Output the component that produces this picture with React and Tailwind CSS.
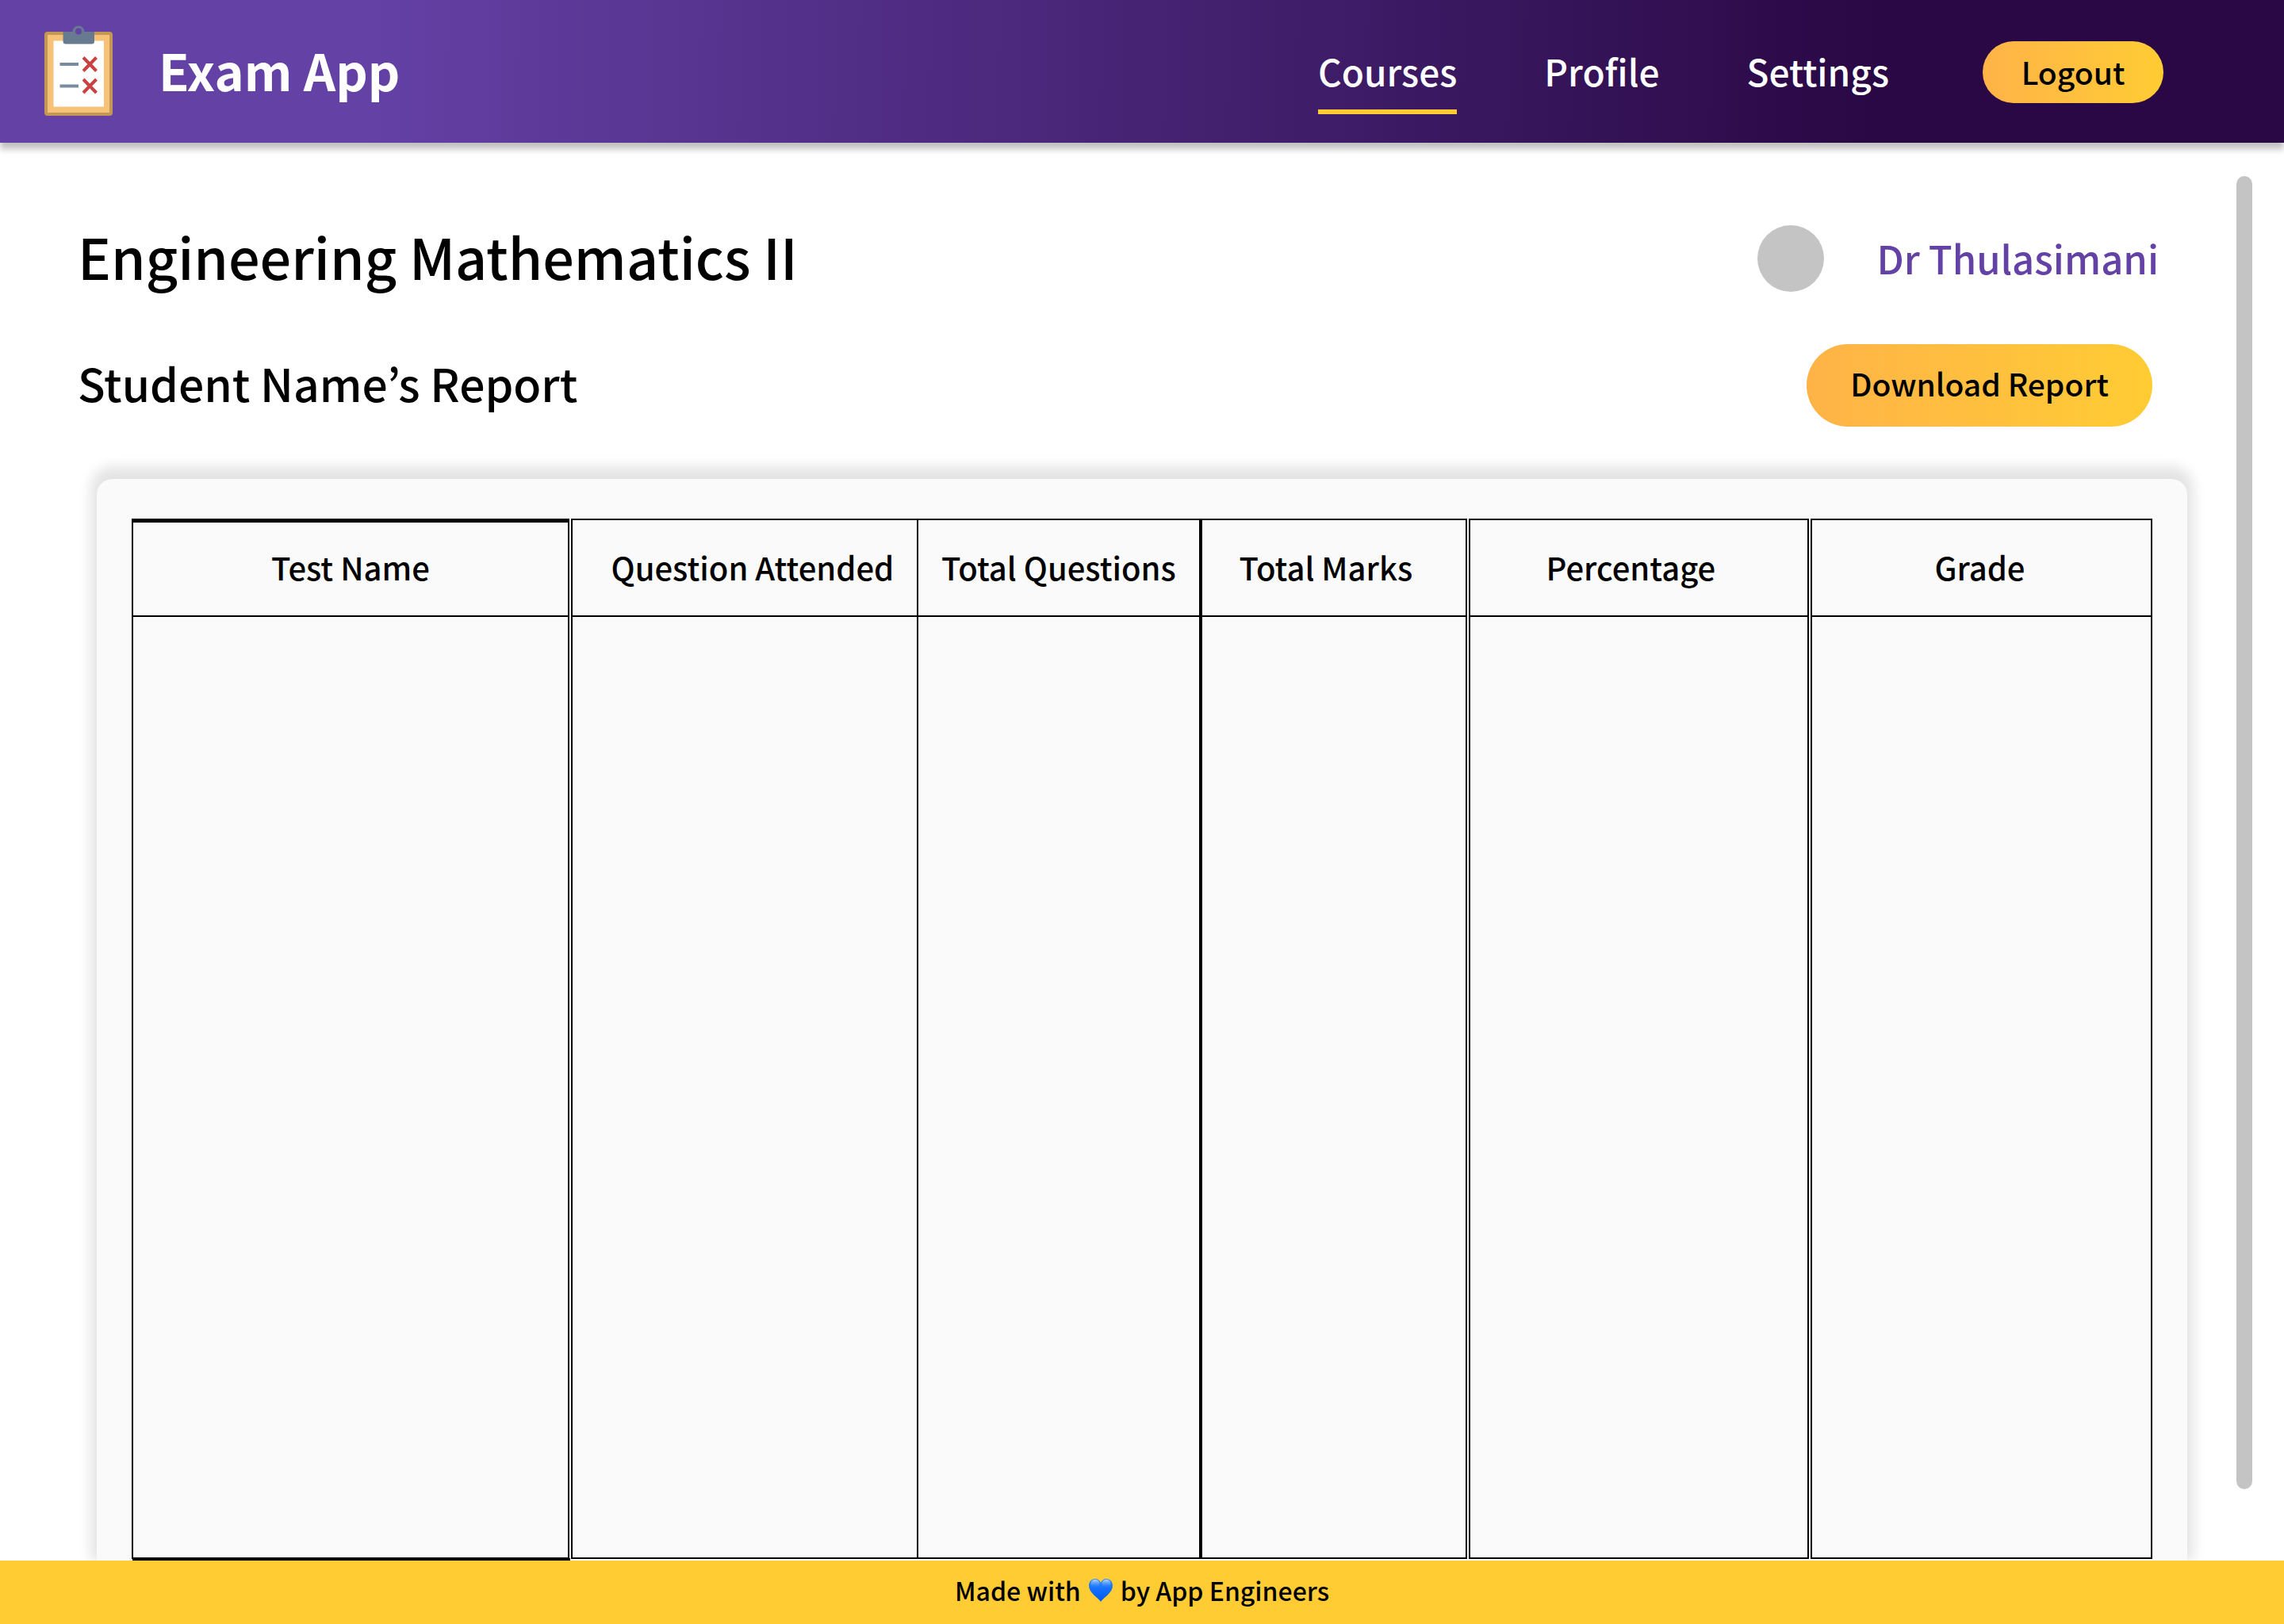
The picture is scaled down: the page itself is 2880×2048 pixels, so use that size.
import React from "react";

const links = ["Courses", "Profile", "Settings"];

const columns = [
  { label: "Test Name", width: "w-[21.68%]", head: "", edge: "border-r-[6px] [border-right-style:double]", first: true },
  { label: "Question Attended", width: "w-[17.2%]", head: "pl-5", edge: "border-r-2" },
  { label: "Total Questions", width: "w-[14.02%]", head: "", edge: "border-r-4" },
  { label: "Total Marks", width: "w-[13.24%]", head: "pr-5", edge: "border-r-[6px] [border-right-style:double]" },
  { label: "Percentage", width: "w-[16.93%]", head: "pr-5", edge: "border-r-[6px] [border-right-style:double]" },
  { label: "Grade", width: "w-[16.93%]", head: "pr-1", edge: "border-r-2" },
];

function ClipboardLogo() {
  return (
    <svg viewBox="0 0 86 116" className="w-[86px] shrink-0" aria-hidden="true">
      <rect x="0" y="8" width="86" height="106" rx="4" fill="#c49755" />
      <rect x="4" y="12" width="78" height="98" fill="#f6c277" />
      <rect x="11.5" y="19.5" width="63.5" height="83" fill="#fff" />
      <path
        fill="#687a8f"
        d="M23.500 8h12a7.500 7.500 0 0 1 15 0h12.500v12a3.500 3.500 0 0 1-3.500 3.500h-32.500a3.500 3.500 0 0 1-3.500-3.500z"
      />
      <circle cx="43" cy="7.500" r="4" fill="#6441a5" />
      <path d="M19.500 49h23.500M19.500 76.500h23.500" stroke="#788ca0" strokeWidth="4" />
      <path
        d="M49 40.500l16.500 17M65.500 40.500l-16.500 17M49 68l16.500 17M65.500 68l-16.500 17"
        stroke="#c94141"
        strokeWidth="4"
      />
    </svg>
  );
}

function BlueHeart() {
  return (
    <svg viewBox="0 0 30 29" className="h-[29px] w-[30px]" role="img" aria-label="love">
      <defs>
        <linearGradient id="heartFill" x1="0" y1="0" x2="0" y2="1">
          <stop offset="0" stopColor="#3c8cf5" />
          <stop offset="0.45" stopColor="#1270fb" />
          <stop offset="1" stopColor="#0058f0" />
        </linearGradient>
        <linearGradient id="heartShine" x1="0" y1="0" x2="0" y2="1">
          <stop offset="0" stopColor="#b4d6ff" />
          <stop offset="1" stopColor="#3f90ff" stopOpacity="0" />
        </linearGradient>
      </defs>
      <path
        d="M15 29C12 24 0 18 0 8.500C0 3.500 3.500 0 8 0c3.500 0 6 2 7 5c1-3 3.500-5 7-5c4.500 0 8 3.500 8 8.500C30 18 18 24 15 29z"
        fill="url(#heartFill)"
      />
      <ellipse cx="8" cy="6" rx="5.500" ry="5" fill="url(#heartShine)" />
      <ellipse cx="22" cy="6" rx="5.500" ry="5" fill="url(#heartShine)" />
    </svg>
  );
}

export default function App() {
  return (
    <div className="flex min-h-screen flex-col bg-white font-['Noto_Sans_CJK_JP',sans-serif] font-medium text-black">
      <header className="relative z-10 flex h-[180px] items-center bg-[linear-gradient(91deg,#6441a5_16%,#2a0845_82%)] pr-[152px] pl-14 text-white shadow-[0_8px_8px_rgba(0,0,0,0.25)]">
        <ClipboardLogo />
        <p className="ml-[58px] pb-1 text-[63px] leading-[80px] font-bold">Exam App</p>
        <nav className="ml-auto flex items-center gap-[110px]">
          {links.map((label) => (
            <a
              key={label}
              href="#"
              className={
                label === "Courses"
                  ? "border-b-[6px] border-[#ffcc33] pt-1 text-[46px] leading-[98px]"
                  : "border-b-[6px] border-transparent pt-1 text-[46px] leading-[98px]"
              }
            >
              {label}
            </a>
          ))}
        </nav>
        <button className="mt-0.5 ml-[118px] h-[78px] w-[228px] rounded-full bg-linear-to-r from-[#ffb347] to-[#ffcc33] pb-0.5 text-[39px] leading-[48px] text-black">
          Logout
        </button>
      </header>

      <div className="flex flex-1">
        <main className="flex flex-1 flex-col">
          <div className="mt-[104px] flex items-center justify-between px-[98px]">
            <h1 className="pb-1.5 text-[70px] leading-[76px]">Engineering Mathematics II</h1>
            <div className="flex items-center">
              <span className="size-[84px] rounded-full bg-[#c4c4c4]" />
              <span className="ml-[66px] pb-0.5 text-[49px] leading-[60px] text-[#6441a5]">Dr Thulasimani</span>
            </div>
          </div>
          <div className="mt-[66px] flex items-center justify-between pr-[106px] pl-[98px]">
            <h2 className="pb-2 text-[57px] leading-[76px]">Student Name’s Report</h2>
            <button className="h-[104px] w-[436px] rounded-full bg-linear-to-r from-[#ffb347] to-[#ffcc33] pb-1.5 text-[39px] leading-[48px]">
              Download Report
            </button>
          </div>
          <section className="mt-[66px] mr-[62px] ml-[122px] flex flex-1 flex-col rounded-t-[20px] bg-[#fafafa] px-11 pt-[50px] pb-0.5 shadow-[0_-8px_16px_8px_rgba(0,0,0,0.11)]">
            <table className="w-full flex-1 table-fixed border-collapse border-2 border-black">
              <thead>
                <tr className="h-[122px]">
                  {columns.map((c) => (
                    <th
                      key={c.label}
                      scope="col"
                      className={`${c.width} ${c.head} ${c.edge} ${c.first ? "shadow-[inset_0_3px_0_#000]" : ""} border-b-2 border-black pb-0.5 text-center text-[40px] leading-[48px] font-medium whitespace-nowrap`}
                    >
                      {c.label}
                    </th>
                  ))}
                </tr>
              </thead>
              <tbody>
                <tr>
                  {columns.map((c) => (
                    <td key={c.label} className={`${c.edge} ${c.first ? "shadow-[0_3px_0_#000]" : ""} border-black`} />
                  ))}
                </tr>
              </tbody>
            </table>
          </section>
        </main>
        <div className="mt-[42px] mr-10 mb-[90px] w-5 rounded-full bg-[#c4c4c4]" />
      </div>

      <footer className="relative z-10 flex h-20 items-center justify-center gap-[10px] bg-[#ffcc33] pb-1.5 text-[32px] leading-[40px]">
        <span>Made with</span>
        <BlueHeart />
        <span>by App Engineers</span>
      </footer>
    </div>
  );
}
